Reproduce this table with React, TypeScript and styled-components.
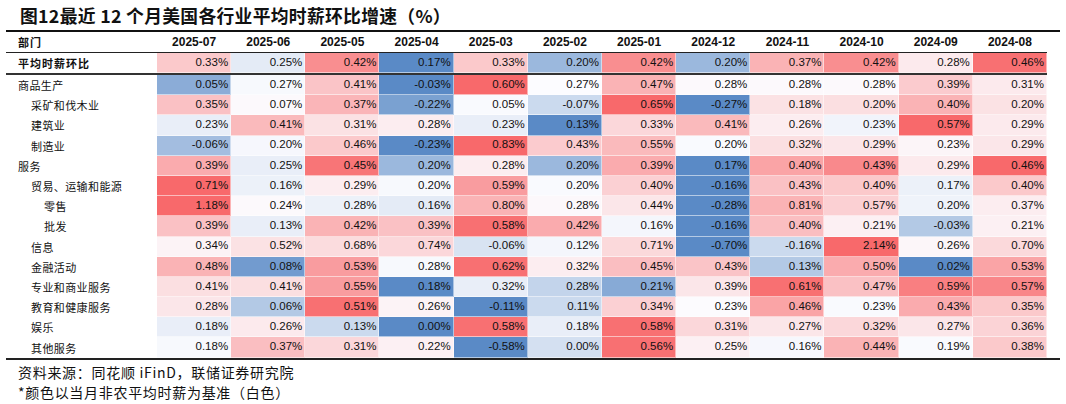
import styled, { createGlobalStyle } from "styled-components";

const GlobalStyle = createGlobalStyle`
    body {
        margin: 0;
        background: #ffffff;
        font-family: "Liberation Sans", Arial, sans-serif;
    }
`

const months = ["2025-07", "2025-06", "2025-05", "2025-04", "2025-03", "2025-02", "2025-01", "2024-12", "2024-11", "2024-10", "2024-09", "2024-08"]

type Row = { name: string; level: number; bold?: boolean; v: number[]; t: number[] }

// t: colour strength, -1 = full blue, 0 = white, 1 = full red
const rows: Row[] = [
    {name: "平均时薪环比", level: 0, bold: true,
        v: [0.33, 0.25, 0.42, 0.17, 0.33, 0.20, 0.42, 0.20, 0.37, 0.42, 0.28, 0.46],
        t: [0.35, -0.15, 0.75, -1, 0.35, -0.6, 0.75, -0.6, 0.5, 0.75, 0.12, 0.95]},
    {name: "商品生产", level: 0,
        v: [0.05, 0.27, 0.41, -0.03, 0.60, 0.27, 0.47, 0.28, 0.28, 0.28, 0.39, 0.31],
        t: [-0.7, -0.03, 0.38, -1, 1, 0, 0.5, 0.02, 0.02, 0.02, 0.33, 0.12]},
    {name: "采矿和伐木业", level: 1,
        v: [0.35, 0.07, 0.37, -0.22, 0.05, -0.07, 0.65, -0.27, 0.18, 0.20, 0.40, 0.20],
        t: [0.4, 0.02, 0.48, -0.8, -0.02, -0.3, 1, -1, 0.18, 0.2, 0.5, 0.18]},
    {name: "建筑业", level: 1,
        v: [0.23, 0.41, 0.31, 0.28, 0.23, 0.13, 0.33, 0.41, 0.26, 0.23, 0.57, 0.29],
        t: [-0.12, 0.45, 0.18, 0.1, -0.12, -1, 0.25, 0.45, 0.1, -0.07, 1, 0.12]},
    {name: "制造业", level: 1,
        v: [-0.06, 0.20, 0.46, -0.23, 0.83, 0.43, 0.55, 0.20, 0.32, 0.29, 0.23, 0.29],
        t: [-0.55, -0.04, 0.35, -1, 1, 0.33, 0.45, -0.02, 0.2, 0.15, 0.05, 0.15]},
    {name: "服务", level: 0,
        v: [0.39, 0.25, 0.45, 0.20, 0.28, 0.20, 0.39, 0.17, 0.40, 0.43, 0.29, 0.46],
        t: [0.55, -0.12, 0.92, -0.6, 0.1, -0.6, 0.55, -1, 0.6, 0.78, 0.12, 1]},
    {name: "贸易、运输和能源", level: 1,
        v: [0.71, 0.16, 0.29, 0.20, 0.59, 0.20, 0.40, -0.16, 0.43, 0.40, 0.17, 0.40],
        t: [1, -0.1, 0.1, -0.03, 0.65, -0.02, 0.3, -1, 0.4, 0.35, -0.1, 0.35]},
    {name: "零售", level: 2,
        v: [1.18, 0.24, 0.28, 0.16, 0.80, 0.28, 0.44, -0.28, 0.81, 0.57, 0.20, 0.37],
        t: [1, 0.02, -0.1, -0.15, 0.5, 0.03, 0.15, -1, 0.5, 0.3, -0.08, 0.1]},
    {name: "批发", level: 2,
        v: [0.39, 0.13, 0.42, 0.39, 0.58, 0.42, 0.16, -0.16, 0.40, 0.21, -0.03, 0.21],
        t: [0.4, -0.12, 0.5, 0.4, 0.95, 0.55, -0.05, -1, 0.42, 0.08, -0.45, 0.08]},
    {name: "信息", level: 1,
        v: [0.34, 0.52, 0.68, 0.74, -0.06, 0.12, 0.71, -0.70, -0.16, 2.14, 0.26, 0.70],
        t: [0.06, 0.18, 0.22, 0.25, -0.22, -0.05, 0.24, -1, -0.3, 1, 0.04, 0.24]},
    {name: "金融活动", level: 1,
        v: [0.48, 0.08, 0.53, 0.28, 0.62, 0.32, 0.45, 0.43, 0.13, 0.50, 0.02, 0.53],
        t: [0.5, -0.85, 0.65, -0.03, 0.95, 0.1, 0.42, 0.38, -0.45, 0.55, -1, 0.6]},
    {name: "专业和商业服务", level: 1,
        v: [0.41, 0.41, 0.55, 0.18, 0.32, 0.28, 0.21, 0.39, 0.61, 0.47, 0.59, 0.57],
        t: [0.2, 0.2, 0.65, -1, -0.12, -0.35, -0.72, 0.15, 0.95, 0.4, 0.85, 0.8]},
    {name: "教育和健康服务", level: 1,
        v: [0.28, 0.06, 0.51, 0.26, -0.11, 0.11, 0.34, 0.23, 0.46, 0.23, 0.43, 0.35],
        t: [0.15, -0.45, 0.95, 0.06, -1, -0.3, 0.3, 0.01, 0.6, -0.02, 0.55, 0.35]},
    {name: "娱乐", level: 1,
        v: [0.18, 0.26, 0.13, 0.00, 0.58, 0.18, 0.58, 0.31, 0.27, 0.32, 0.27, 0.36],
        t: [-0.12, 0.12, -0.3, -1, 0.95, -0.12, 0.95, 0.25, 0.15, 0.25, 0.15, 0.28]},
    {name: "其他服务", level: 1,
        v: [0.18, 0.37, 0.31, 0.22, -0.58, 0.00, 0.56, 0.25, 0.16, 0.44, 0.19, 0.38],
        t: [-0.03, 0.42, 0.25, 0.08, -1, -0.25, 0.95, 0.08, -0.04, 0.5, -0.02, 0.35]},
]

const WHITE = [252, 252, 255]
const RED = [248, 105, 107]
const BLUE = [90, 138, 198]

const heat = (t: number) => {
    const c = t >= 0 ? RED : BLUE
    const a = Math.min(1, Math.abs(t))
    const mix = WHITE.map((w, i) => Math.round(w + (c[i] - w) * a))
    return `rgb(${mix.join(",")})`
}

export default function App() {
    return (
        <Page>
            <GlobalStyle/>
            <Title>图12最近 12 个月美国各行业平均时薪环比增速（%）</Title>
            <Frame>
                <HeaderRow>
                    <Label $level={0} $bold>部门</Label>
                    {months.map(m => <HeadCell key={m}>{m}</HeadCell>)}
                </HeaderRow>
                {rows.map((r, i) => (
                    <BodyRow key={r.name} $first={i === 0}>
                        <Label $level={r.level} $bold={r.bold}>{r.name}</Label>
                        {r.v.map((v, j) => (
                            <ValueCell key={j} $bg={heat(r.t[j])}>{v.toFixed(2)}%</ValueCell>
                        ))}
                    </BodyRow>
                ))}
            </Frame>
            <Notes>
                <p>资料来源：同花顺 iFinD，联储证券研究院</p>
                <p>*颜色以当月非农平均时薪为基准（白色）</p>
            </Notes>
        </Page>
    )
}

const Page = styled.div`
    width: 1066px;
    height: 404px;
    overflow: hidden;
    color: #111;
`

const Title = styled.h1`
    margin: 0;
    height: 30px;
    padding-left: 20px;
    display: flex;
    align-items: center;
    font-family: "Noto Sans CJK SC", "Liberation Sans", sans-serif;
    font-weight: 700;
    font-size: 17.8px;
    letter-spacing: 0.3px;
`

const Frame = styled.div`
    margin-left: 6px;
    width: 1054px;
    border-top: 2px solid #111;
    border-bottom: 2px solid #222;
`

const gridCols = `
    display: grid;
    grid-template-columns: 151px repeat(12, 1fr);
    width: 1041px;
`

const HeaderRow = styled.div`
    ${gridCols};
    height: 20px;
    border-bottom: 1px solid #222;
`

const BodyRow = styled.div<{ $first?: boolean }>`
    ${gridCols};
    height: ${p => (p.$first ? "20px" : "20.2px")};
    border-bottom: ${p => (p.$first ? "2px solid #333" : "none")};
`

const Label = styled.div<{ $level: number; $bold?: boolean }>`
    display: flex;
    align-items: center;
    padding-left: ${p => 12 + p.$level * 13}px;
    font-family: "Noto Sans CJK SC", sans-serif;
    font-size: 11px;
    letter-spacing: ${p => (p.$bold ? "1px" : "0.4px")};
    font-weight: ${p => (p.$bold ? 700 : 400)};
    white-space: nowrap;
`

const HeadCell = styled.div`
    display: flex;
    align-items: center;
    justify-content: center;
    font-weight: 700;
    font-size: 12px;
`

const ValueCell = styled.div<{ $bg: string }>`
    display: flex;
    align-items: center;
    justify-content: flex-end;
    padding-right: 2px;
    background: ${p => p.$bg};
    border-right: 1px solid rgba(255, 255, 255, 0.5);
    border-bottom: 1px solid rgba(255, 255, 255, 0.55);
    font-size: 11.5px;
    line-height: 1;
`

const Notes = styled.div`
    padding: 2px 0 0 18px;
    font-family: "Noto Sans CJK SC", sans-serif;
    font-size: 14px;
    letter-spacing: 0.7px;

    p {
        margin: 0;
        line-height: 20px;
    }
`
